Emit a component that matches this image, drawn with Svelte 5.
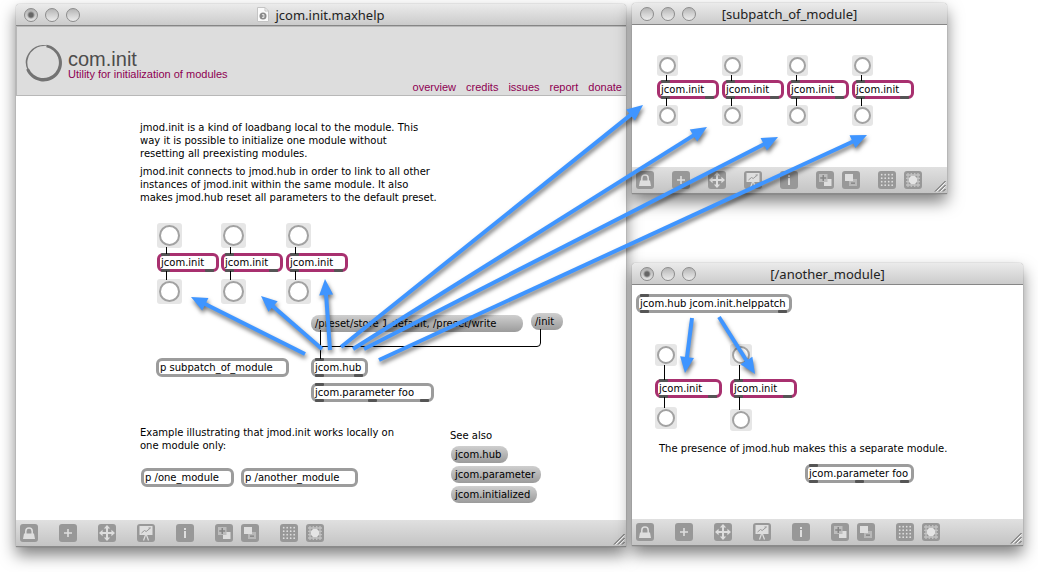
<script>
  const toolGroups = [
    ['Lock'], ['New object'], ['Move'], ['Presentation'], ['Inspector'],
    ['Add to presentation', 'Remove from presentation'],
    ['Grid', 'Snap to grid']
  ];

  const init = (x, y, w) => ({ x, y, w, text: 'jcom.init', ports: 2, inlet: true, accent: true });

  const windows = [
    {
      title: 'jcom.init.maxhelp', x: 16, y: 4, w: 610, canvas: 494, gap: 21, doc: true, dirty: true, header: true,
      bangs: [
        [141, 197, 25], [205, 197, 25], [270, 197, 25],
        [141, 253, 25], [205, 253, 25], [270, 253, 25]
      ],
      cords: [
        'M150.5 221V228M150.5 245V254', 'M214.5 221V228M214.5 245V254', 'M279.5 221V228M279.5 245V254',
        'M304.5 304V333', 'M524.5 303V317Q524.5 320.5 521 320.5H304.5'
      ],
      objects: [
        init(141, 227, 62), init(205, 227, 62), init(270, 227, 62),
        { x: 140, y: 332, w: 133, text: 'p subpatch_of_module' },
        { x: 295, y: 332, w: 57, text: 'jcom.hub', ports: 2, inlet: true },
        { x: 295, y: 357, w: 123, text: 'jcom.parameter foo', ports: 3, inlet: true },
        { x: 125, y: 442, w: 93, text: 'p /one_module' },
        { x: 225, y: 442, w: 117, text: 'p /another_module' }
      ],
      messages: [
        { x: 295, y: 289, w: 212, text: '/preset/store 1 default, /preset/write' },
        { x: 515, y: 287, w: 32, text: '/init' },
        { x: 435, y: 420, w: 57, text: 'jcom.hub' },
        { x: 435, y: 440, w: 90, text: 'jcom.parameter' },
        { x: 435, y: 460, w: 86, text: 'jcom.initialized' }
      ],
      comments: [
        { x: 124, y: 95, lines: ['jmod.init is a kind of loadbang local to the module. This', 'way it is possible to initialize one module without', 'resetting all preexisting modules.'] },
        { x: 124, y: 139, lines: ['jmod.init connects to jmod.hub in order to link to all other', 'instances of jmod.init within the same module. It also', 'makes jmod.hub reset all parameters to the default preset.'] },
        { x: 124, y: 400, lines: ['Example illustrating that jmod.init works locally on', 'one module only:'] },
        { x: 434, y: 403, lines: ['See also'] }
      ]
    },
    {
      title: '[subpatch_of_module]', x: 632, y: 3, w: 315, canvas: 142, gap: 18,
      bangs: [0, 65, 130, 195].flatMap((d) => [[25 + d, 30, 21], [25 + d, 80, 21]]),
      cords: [0, 65, 130, 195].map((d) => `M${34.5 + d} 50V56M${34.5 + d} 73V81`),
      objects: [0, 65, 130, 195].map((d) => init(25 + d, 55, 62)),
      messages: [], comments: []
    },
    {
      title: '[/another_module]', x: 632, y: 263, w: 391, canvas: 234, gap: 21, dirty: true,
      bangs: [[23, 59, 22], [98, 59, 22], [23, 122, 22], [98, 124, 22]],
      cords: ['M32.5 80V95M32.5 112V123', 'M107.5 80V95M107.5 112V125'],
      objects: [
        { x: 4, y: 9, w: 156, text: 'jcom.hub jcom.init.helppatch', ports: 2, inlet: true },
        init(23, 94, 67), init(98, 94, 67),
        { x: 173, y: 179, w: 109, text: 'jcom.parameter foo', ports: 3, inlet: true }
      ],
      messages: [],
      comments: [{ x: 27, y: 157, lines: ['The presence of jmod.hub makes this a separate module.'] }]
    }
  ];

  const arrows = [
    [305, 354, 191, 297], [322, 349, 261, 296], [330, 350, 325, 279],
    [341, 347, 643, 105], [353, 349, 707, 127], [364, 349, 778, 137], [379, 360, 867, 135],
    [692, 318, 685, 373], [719, 317, 755, 374]
  ].map(([x, y, tx, ty]) => ({
    tx, ty,
    len: Math.hypot(tx - x, ty - y),
    angle: (Math.atan2(ty - y, tx - x) * 180) / Math.PI
  }));

  const links = ['overview', 'credits', 'issues', 'report', 'donate'];
</script>

{#snippet glyph(name)}
  <svg viewBox="0 0 18 18" width="18" height="18" fill="#dedede" aria-hidden="true">
    {#if name === 'Lock'}
      <path d="M5.8 10V7.200a3.200 3.200 0 0 1 6.400 0V10" fill="none" stroke="#dedede" stroke-width="1.5" />
      <path d="M4 9.500h10l1 5.500H3z" />
    {:else if name === 'New object'}
      <path d="M8.200 5h1.600v3.200H13v1.600H9.800V13H8.200V9.800H5V8.200h3.200z" />
    {:else if name === 'Move'}
      <path d="M9 1l3.2 3.6H10V8h3.4V5.8L17 9l-3.6 3.2V10H10v3.4h2.2L9 17l-3.2-3.6H8V10H4.6v2.2L1 9l3.6-3.2V8H8V4.6H5.8z" />
    {:else if name === 'Presentation'}
      <path d="M2.5 2h13v9h-13z" />
      <path d="M4.500 9l3-2.500 1.700 1L13.500 4M11.500 4h2" fill="none" stroke="#989898" />
      <path d="M8.5 11L6.500 16.500M9.500 11l2 5.500" fill="none" stroke="#dedede" stroke-width="1.200" />
    {:else if name === 'Inspector'}
      <path d="M8 4h2v2H8zM8 7h2v7H8z" />
    {:else if name === 'Add to presentation'}
      <path d="M8 8h7.500v7H8z" />
      <path d="M3 3h8.500v8H3z" fill="#bdbdbd" />
      <path d="M6.500 4H8v2.200h2.200v1.500H8V10H6.500V7.700H4.200V6.200h2.300z" fill="#858585" />
    {:else if name === 'Remove from presentation'}
      <path d="M7 8h8v7H7z" fill="#b8b8b8" />
      <path d="M9 11.500h4v1.300H9z" fill="#808080" />
      <path d="M3 3h8v7H3z" />
    {:else if name === 'Grid'}
      {#each [3, 6.5, 10, 13.5] as gx}
        {#each [3, 6.5, 10, 13.5] as gy}<circle cx={gx + 0.7} cy={gy + 0.7} r="0.9" />{/each}
      {/each}
    {:else}
      <path d="M4 2v14M7.300 2v14M10.700 2v14M14 2v14M2 4h14M2 7.300h14M2 10.700h14M2 14h14" fill="none" stroke="#c2c2c2" stroke-width="1.300" />
      <circle cx="9" cy="9" r="4.200" fill="#e4e4e4" />
    {/if}
  </svg>
{/snippet}

<main class="desktop">
  {#each windows as win}
    <section class="window" style="left:{win.x}px;top:{win.y}px;width:{win.w}px" aria-label={win.title}>
      <header class="titlebar">
        <div class="lights">
          <button class:dirty={win.dirty} aria-label="Close"></button>
          <button aria-label="Minimize"></button>
          <button aria-label="Zoom"></button>
        </div>
        <h2>
          {#if win.doc}
            <svg width="12" height="15" viewBox="0 0 12 15" aria-hidden="true">
              <path d="M.5.5h7.5l3.5 3.5v10.5h-11z" fill="#fafafa" stroke="#c4c4c4" />
              <path d="M8 .5V4h3.5" fill="none" stroke="#c4c4c4" />
              <circle cx="6" cy="9" r="3.500" fill="#8a8a8a" />
              <path d="M5 7.500h2v3H5M5.500 9H7" stroke="#eee" stroke-width=".8" fill="none" />
            </svg>
          {/if}
          {win.title}
        </h2>
      </header>

      <div class="canvas" style="height:{win.canvas}px">
        {#if win.header}
          <div class="banner">
            <svg class="ring" width="38" height="38" viewBox="0 0 38 38" aria-hidden="true">
              <path d="M2.5 26A17.6 17.6 0 0 1 22 1.4L21 2A16.9 16.9 0 0 0 3.5 25z" fill="#757575" />
              <path d="M21.5 .7A18.5 18.5 0 1 1 1.2 25.6L3.900 24.500A15.600 15.600 0 1 0 21.3 3.2z" fill="#737373" />
            </svg>
            <div class="name">
              <h1>com.init</h1>
              <p>Utility for initialization of modules</p>
            </div>
            <nav>
              {#each links as link}<a href="#{link}">{link}</a>{/each}
            </nav>
          </div>
        {/if}

        {#each win.bangs as [x, y, size]}
          <button class="bang" style="left:{x}px;top:{y}px;width:{size}px;height:{size}px" aria-label="bang"></button>
        {/each}
        {#each win.messages as m}
          <button class="message" style="left:{m.x}px;top:{m.y}px;width:{m.w}px">{m.text}</button>
        {/each}
        {#each win.objects as o}
          <div class="object" class:accent={o.accent} style="left:{o.x}px;top:{o.y}px;width:{o.w}px">
            {#if o.inlet}<div class="ports top"><i></i></div>{/if}
            <span>{o.text}</span>
            {#if o.ports}
              <div class="ports bottom">{#each { length: o.ports } as _}<i></i>{/each}</div>
            {/if}
          </div>
        {/each}
        <svg class="cords" aria-hidden="true">
          {#each win.cords as d}<path {d} />{/each}
        </svg>
        {#each win.comments as c}
          <p class="comment" style="left:{c.x}px;top:{c.y}px">
            {#each c.lines as line, n}{#if n}<br />{/if}{line}{/each}
          </p>
        {/each}
      </div>

      <footer class="toolbar" style="gap:{win.gap}px">
        {#each toolGroups as group}
          <div class="group">
            {#each group as tool}<button aria-label={tool}>{@render glyph(tool)}</button>{/each}
          </div>
        {/each}
        <svg class="grip" width="12" height="12" viewBox="0 0 12 12" aria-hidden="true">
          <path d="M1 11.5L11.5 1M5 11.5L11.5 5M9 11.5l2.5-2.5" stroke="#555" />
          <path d="M2.5 11.5L11.5 2.5M6.5 11.5L11.5 6.5" stroke="#f4f4f4" />
        </svg>
      </footer>
    </section>
  {/each}

  <svg class="arrows" aria-hidden="true">
    {#each arrows as a}
      <g class="arrow">
        <g transform="translate({a.tx} {a.ty}) rotate({a.angle})">
          <path d="M{-a.len} -2H-13V2H{-a.len}z" />
          <path d="M0 0L-16 -7V7z" />
        </g>
      </g>
    {/each}
  </svg>
</main>

<style>
  :global(body) { margin: 0; background: #fff; }

  .desktop {
    position: relative;
    min-height: 100vh;
    overflow: hidden;
    font: 10px/13px "DejaVu Sans", Verdana, sans-serif;
    color: #000;
  }
  h1, h2, p { margin: 0; font-weight: normal; }
  button { padding: 0; border: 0; font: inherit; color: inherit; }

  .window {
    position: absolute;
    background: #fff;
    border-radius: 4px 4px 0 0;
    box-shadow: 0 0 1px rgba(0, 0, 0, .55), 0 8px 16px rgba(0, 0, 0, .5);
  }

  .titlebar {
    display: grid;
    grid-template-columns: 1fr auto 1fr;
    align-items: center;
    box-sizing: border-box;
    height: 22px;
    padding: 0 8px;
    border-bottom: 1px solid #868686;
    border-radius: 4px 4px 0 0;
    background: linear-gradient(#ebebeb, #cbcbcb);
  }
  .lights { display: flex; gap: 7px; }
  .lights button {
    width: 14px;
    height: 14px;
    border: 1px solid #8c8c8c;
    border-radius: 50%;
    background: linear-gradient(#b5b5b5, #d2d2d2 50%, #ececec);
  }
  .lights .dirty { background: radial-gradient(circle, #666 0 2px, transparent 4px), linear-gradient(#b0b0b0, #e4e4e4); }
  h2 {
    display: flex;
    align-items: center;
    gap: 6px;
    font: 13px/20px "Noto Sans", "Open Sans", sans-serif;
    color: #222;
  }

  .canvas { position: relative; }

  .banner {
    display: flex;
    box-sizing: border-box;
    height: 70px;
    padding: 0 4px 0 8px;
    border: 1px solid #b8b8b8;
    border-width: 1px 0 1px 1px;
    background: #ddd;
    font-family: "Liberation Sans", Arial, sans-serif;
    color: #8e0052;
  }
  .ring { flex: none; margin: 17px 5px 0 0; }
  .name { flex: 1; padding-top: 23px; font-size: 11px; line-height: 12px; }
  h1 { font-size: 20px; line-height: 18px; color: #4c4c4c; }
  nav {
    display: flex;
    align-items: flex-end;
    gap: 10px;
    padding-bottom: 1px;
    font-size: 11px;
    line-height: 13px;
  }
  nav a { color: inherit; text-decoration: none; }

  .bang {
    position: absolute;
    border-radius: 3px;
    background: #e6e6e6;
  }
  .bang::before {
    content: "";
    position: absolute;
    inset: 2px;
    border: 2px solid #a2a2a2;
    border-radius: 50%;
    background: #fff;
  }

  .object {
    position: absolute;
    box-sizing: border-box;
    height: 19px;
    border: 3px solid #9c9c9c;
    border-radius: 6px;
    background: #fff;
    padding-left: 1px;
    white-space: nowrap;
  }
  .accent { border-color: #a8306f; }
  .ports {
    position: absolute;
    left: 1px;
    right: 2px;
    display: flex;
    justify-content: space-between;
  }
  .ports i { width: 9px; height: 3px; border-radius: 1px; background: #555; }
  .top { top: -3px; }
  .bottom { bottom: -3px; }

  .message {
    position: absolute;
    height: 17px;
    padding-left: 4px;
    border-radius: 8px;
    background: linear-gradient(#cfcfcf, #9b9b9b);
    text-align: left;
    line-height: 17px;
    white-space: nowrap;
  }

  .cords { position: absolute; inset: 0; width: 100%; height: 100%; pointer-events: none; }
  .cords path { fill: none; stroke: #000; }

  .comment { position: absolute; white-space: nowrap; }

  .toolbar {
    display: flex;
    align-items: center;
    box-sizing: border-box;
    height: 27px;
    padding: 0 1px 1px 4px;
    border-bottom: 1px solid #8a8a8a;
    background: linear-gradient(#e0e0e0, #c4c4c4);
  }
  .group { display: flex; flex: none; gap: 8px; }
  .toolbar button {
    display: flex;
    width: 18px;
    height: 18px;
    border-radius: 3px;
    background: #989898;
  }
  .grip { flex: none; align-self: flex-end; margin-left: auto; }
  .toolbar .group:last-of-type { margin-right: -12px; }

  .arrows { position: absolute; inset: 0; width: 100%; height: 100%; pointer-events: none; }
  .arrow { filter: drop-shadow(1px 3px 2px rgba(0, 0, 0, .55)); fill: #3f95ff; }
</style>
